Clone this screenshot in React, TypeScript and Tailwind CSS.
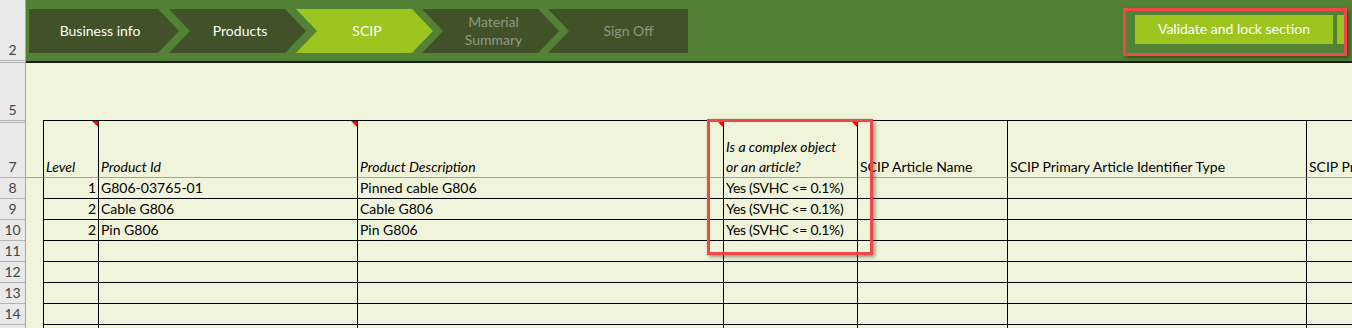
import React from 'react';

interface Row {
  n: number;
  lvl?: string;
  id?: string;
  desc?: string;
  cx?: string;
}

const rows: Row[] = [
  { n: 8, lvl: '1', id: 'G806-03765-01', desc: 'Pinned cable G806', cx: 'Yes (SVHC <= 0.1%)' },
  { n: 9, lvl: '2', id: 'Cable G806', desc: 'Cable G806', cx: 'Yes (SVHC <= 0.1%)' },
  { n: 10, lvl: '2', id: 'Pin G806', desc: 'Pin G806', cx: 'Yes (SVHC <= 0.1%)' },
  { n: 11 },
  { n: 12 },
  { n: 13 },
  { n: 14 },
  { n: 15 },
];

// little red comment marker in the top right corner of a cell
const Note = () => (
  <span className="absolute top-0 right-0 w-0 h-0 border-l-[6px] border-l-transparent border-t-[6px] border-t-[#ff0000]" />
);

const HeadNum = ({ label, h }: { label?: string; h: string }) => (
  <div className={`${h} shrink-0 border-b border-[#b3b3b3] flex items-end justify-center leading-[20px] text-[#444]`}>
    {label}
  </div>
);

const App: React.FC = () => {
  const cell = 'border-l border-b border-black px-[2px] flex items-end leading-[20px] whitespace-nowrap overflow-hidden';
  const head = 'relative border-t border-l border-black border-b border-b-[#a3a3a3] px-[2px] flex items-end leading-[20px] whitespace-nowrap overflow-hidden italic';

  return (
    <div className="relative w-[1352px] h-[328px] overflow-hidden bg-[#f0f4da] flex text-[14px] text-black font-['Lato',sans-serif]">
      {/* row headers */}
      <div className="w-[26px] shrink-0 bg-[#e9e9e9] border-r border-[#a6a6a6] flex flex-col">
        <HeadNum label="2" h="h-[61px]" />
        <HeadNum h="h-[2px]" />
        <HeadNum label="5" h="h-[58px]" />
        <HeadNum h="h-[2px]" />
        <HeadNum label="7" h="h-[55px]" />
        {rows.map((r) => (
          <HeadNum key={r.n} label={r.n < 15 ? String(r.n) : undefined} h="h-[21px]" />
        ))}
      </div>

      <div className="flex-1 flex flex-col min-w-0">
        {/* top navigation band */}
        <div className="h-[61px] shrink-0 bg-[#538135] flex items-start">
          <div className="flex pl-[3px] pt-[9px] text-white">
            <div className="w-[150px] h-[44px] bg-[#415229] flex items-center justify-center pr-[8px] pb-[1px] [clip-path:polygon(0_0,129px_0,150px_50%,129px_100%,0_100%)]">
              Business info
            </div>
            <div className="-ml-[10px] w-[137px] h-[44px] bg-[#415229] flex items-center justify-center pl-[5px] pb-[1px] [clip-path:polygon(0_0,116px_0,137px_50%,116px_100%,0_100%,21px_50%)]">
              Products
            </div>
            <div className="-ml-[10px] w-[137px] h-[44px] bg-[#9cc520] flex items-center justify-center pl-[5px] pb-[1px] [clip-path:polygon(0_0,116px_0,137px_50%,116px_100%,0_100%,21px_50%)]">
              SCIP
            </div>
            <div className="-ml-[11px] w-[137px] h-[44px] bg-[#415229] flex items-center justify-center pl-[6px] text-[#8d9a84] leading-[18px] text-center [clip-path:polygon(0_0,116px_0,137px_50%,116px_100%,0_100%,21px_50%)]">
              Material
              <br />
              Summary
            </div>
            <div className="-ml-[11px] w-[140px] h-[44px] bg-[#415229] flex items-center justify-center pl-[21px] pb-[1px] text-[#8d9a84] [clip-path:polygon(0_0,100%_0,100%_100%,0_100%,21px_50%)]">
              Sign Off
            </div>
          </div>
          <div className="ml-auto mt-[15px] w-[198px] h-[29px] bg-[#9cc520] text-white flex items-center justify-center pb-[3px]">
            Validate and lock section
          </div>
          <div className="ml-[4px] mr-[7px] mt-[15px] w-[8px] h-[29px] bg-[#9cc520]" />
        </div>
        <div className="h-[2px] shrink-0 bg-[#1c1c1c]" />
        <div className="h-[57px] shrink-0" />

        {/* sheet table */}
        <div className="grid grid-cols-[17px_55px_259px_366px_134px_150px_299px_1fr] auto-rows-[21px] [grid-template-rows:58px]">
          <div className="border-b border-[#a3a3a3]" />
          <div className={head}>
            Level
            <Note />
          </div>
          <div className={head}>
            Product Id
            <Note />
          </div>
          <div className={head}>
            Product Description
            <Note />
          </div>
          <div className={head}>
            <span>
              Is a complex object
              <br />
              or an article?
            </span>
            <Note />
          </div>
          <div className={`${head} not-italic`}>SCIP Article Name</div>
          <div className={`${head} not-italic`}>SCIP Primary Article Identifier Type</div>
          <div className={`${head} not-italic`}>SCIP Pr</div>

          {rows.map((r) => (
            <React.Fragment key={r.n}>
              <div />
              <div className={`${cell} justify-end`}>{r.lvl}</div>
              <div className={cell}>{r.id}</div>
              <div className={cell}>{r.desc}</div>
              <div className={`${cell} tracking-[-0.3px]`}>{r.cx}</div>
              <div className={cell} />
              <div className={cell} />
              <div className={cell} />
            </React.Fragment>
          ))}
        </div>
      </div>

      {/* annotation boxes */}
      <div className="absolute left-[1123px] top-[8px] w-[224px] h-[48px] border-[3px] border-[#f04848] shadow-[2px_2px_4px_rgba(0,0,0,0.4)]" />
      <div className="absolute left-[707px] top-[119px] w-[166px] h-[136px] border-[3px] border-[#f04848] shadow-[2px_2px_4px_rgba(0,0,0,0.4)]" />
    </div>
  );
};

export default App;
